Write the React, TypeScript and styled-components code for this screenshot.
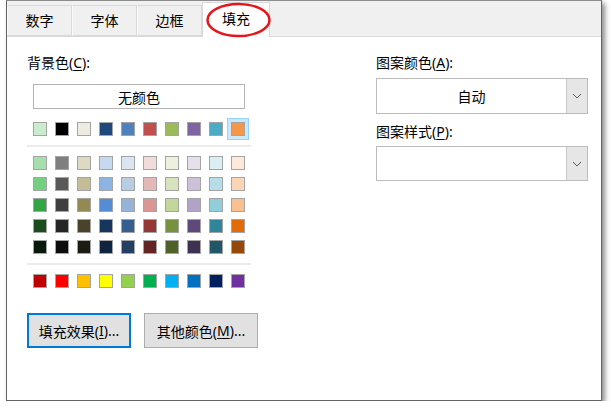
import styled, { createGlobalStyle } from "styled-components";

const GlobalStyle = createGlobalStyle`
  body {
    margin: 0;
    background: #ffffff;
    font-family: "Noto Sans", "Noto Sans CJK SC", sans-serif;
    font-size: 14px;
    color: #000;
  }
`

const themeRow = ["#c9eccf", "#000000", "#eeece1", "#1f497d", "#4f81bd", "#c0504d", "#9bbb59", "#8064a2", "#4bacc6", "#f79646"]

const tintRows = [
  ["#a6dfac", "#7f7f7f", "#ddd9c3", "#c6d9f0", "#dbe5f1", "#f2dcdb", "#ebf1dd", "#e5e0ec", "#dbeef3", "#fdeada"],
  ["#74cf7e", "#595959", "#c4bd97", "#8db3e2", "#b8cce4", "#e5b9b7", "#d7e3bc", "#ccc1d9", "#b7dde8", "#fbd5b5"],
  ["#33a545", "#3f3f3f", "#938953", "#548dd4", "#95b3d7", "#d99694", "#c3d69b", "#b2a2c7", "#92cddc", "#fac08f"],
  ["#1b4d1f", "#262626", "#494429", "#17365d", "#366092", "#953734", "#76923c", "#5f497a", "#31859b", "#e36c09"],
  ["#06190a", "#0d0d0d", "#1d1b10", "#0f243e", "#244061", "#632423", "#4f6128", "#3f3151", "#205867", "#974806"],
]

const standardRow = ["#c00000", "#ff0000", "#ffc000", "#ffff00", "#92d050", "#00b050", "#00b0f0", "#0070c0", "#002060", "#7030a0"]

const tabs = ["数字", "字体", "边框", "填充"]

const Chevron = () => (
  <svg width="10" height="6" viewBox="0 0 10 6">
    <path d="M1 1 L5 5 L9 1" fill="none" stroke="#5a5a5a" strokeWidth="1" />
  </svg>
)

const App = () => {
  return (
    <>
      <GlobalStyle />
      <Frame>
        <TabStrip>
          {tabs.map((t, i) => (
            <Tab key={t} $active={i === 3}>{t}</Tab>
          ))}
        </TabStrip>
        <Content>
          <LeftColumn>
            <Label>背景色(<u>C</u>):</Label>
            <NoColorButton>无颜色</NoColorButton>
            <Palette>
              <SwatchGrid>
                {themeRow.map((c, i) => (
                  <Swatch key={c} $color={c} $selected={i === 9} />
                ))}
              </SwatchGrid>
              <Separator />
              <SwatchGrid>
                {tintRows.flat().map((c, i) => (
                  <Swatch key={i} $color={c} />
                ))}
              </SwatchGrid>
              <Separator />
              <SwatchGrid>
                {standardRow.map((c) => (
                  <Swatch key={c} $color={c} />
                ))}
              </SwatchGrid>
            </Palette>
            <ButtonRow>
              <PushButton $width={104} $focused>填充效果(<u>I</u>)...</PushButton>
              <PushButton $width={114}>其他颜色(<u>M</u>)...</PushButton>
            </ButtonRow>
          </LeftColumn>
          <RightColumn>
            <Label>图案颜色(<u>A</u>):</Label>
            <Dropdown $height={36}>
              <DropValue>自动</DropValue>
              <DropArrow><Chevron /></DropArrow>
            </Dropdown>
            <Label $gap={8}>图案样式(<u>P</u>):</Label>
            <Dropdown $height={35} $gap={4}>
              <DropValue />
              <DropArrow><Chevron /></DropArrow>
            </Dropdown>
          </RightColumn>
        </Content>
        <Highlight width="70" height="38" viewBox="0 0 70 38">
          <ellipse cx="34.5" cy="18" rx="31" ry="16" fill="none" stroke="#e5161b" strokeWidth="2.5" />
        </Highlight>
      </Frame>
    </>
  )
}

const Frame = styled.div`
  position: relative;
  margin-left: 6px;
  width: 596px;
  height: 401px;
  box-sizing: border-box;
  border: 1px solid #646464;
  border-top-color: #8c8c8c;
  box-shadow: 3px 3px 5px rgba(0, 0, 0, 0.45);
  background: #fff;
  display: flex;
  flex-direction: column;
`

const TabStrip = styled.div`
  height: 35px;
  background: #f0f0f0;
  display: flex;
  align-items: flex-end;
  position: relative;
  z-index: 1;
`

const Tab = styled.div<{ $active?: boolean }>`
  box-sizing: border-box;
  width: ${p => (p.$active ? 68 : 65)}px;
  height: ${p => (p.$active ? 35 : 31)}px;
  margin-bottom: ${p => (p.$active ? -1 : 0)}px;
  background: ${p => (p.$active ? "#ffffff" : "#f0f0f0")};
  border: 1px solid #d9d9d9;
  border-bottom: ${p => (p.$active ? "none" : "1px solid #d9d9d9")};
  border-left-color: ${p => (p.$active ? "#d9d9d9" : "#fafafa")};
  display: flex;
  align-items: center;
  justify-content: center;
  padding-bottom: ${p => (p.$active ? 2 : 0)}px;
  line-height: 20px;
`

const Content = styled.div`
  flex: 1;
  display: flex;
  padding: 16px 0 0 20px;
  border-top: 1px solid #d9d9d9;
`

const LeftColumn = styled.div`
  width: 349px;
  display: flex;
  flex-direction: column;
  align-items: flex-start;
`

const RightColumn = styled.div`
  width: 212px;
  display: flex;
  flex-direction: column;
`

const Label = styled.div<{ $gap?: number }>`
  line-height: 20px;
  height: 20px;
  margin-top: ${p => p.$gap || 0}px;
  u {
    text-decoration-thickness: 1px;
    text-underline-offset: 2px;
  }
`

const NoColorButton = styled.div`
  box-sizing: border-box;
  margin: 11px 0 0 6px;
  width: 212px;
  height: 25px;
  border: 1px solid #b4b4b4;
  background: #fff;
  display: flex;
  align-items: center;
  justify-content: center;
`

const Palette = styled.div`
  width: 224px;
  margin-top: 13px;
  display: flex;
  flex-direction: column;
`

const SwatchGrid = styled.div`
  display: grid;
  grid-template-columns: repeat(10, 14px);
  column-gap: 8px;
  row-gap: 7px;
  padding: 0 6px;
`

const Swatch = styled.div<{ $color: string; $selected?: boolean }>`
  box-sizing: border-box;
  width: 14px;
  height: 14px;
  background: ${p => p.$color};
  border: 1px solid #a4a4a4;
  box-shadow: ${p => (p.$selected ? "0 0 0 3px #cce8ff, 0 0 0 4px #99d1ff" : "none")};
`

const Separator = styled.div`
  height: 2px;
  background: #ececec;
  margin: 9px 0;
`

const ButtonRow = styled.div`
  display: flex;
  gap: 13px;
  margin-top: 25px;
`

const PushButton = styled.div<{ $width: number; $focused?: boolean }>`
  box-sizing: border-box;
  width: ${p => p.$width}px;
  height: 35px;
  background: #e1e1e1;
  border: ${p => (p.$focused ? "2px solid #0078d7" : "1px solid #adadad")};
  display: flex;
  align-items: center;
  justify-content: center;
  u {
    text-underline-offset: 2px;
  }
`

const Dropdown = styled.div<{ $height: number; $gap?: number }>`
  box-sizing: border-box;
  height: ${p => p.$height}px;
  margin-top: ${p => (p.$gap === undefined ? 5 : p.$gap)}px;
  border: 1px solid #bcbcbc;
  background: #fff;
  display: flex;
`

const DropValue = styled.div`
  flex: 1;
  display: flex;
  align-items: center;
  justify-content: center;
`

const DropArrow = styled.div`
  width: 20px;
  background: #e6e6e6;
  border-left: 1px solid #c8c8c8;
  display: flex;
  align-items: center;
  justify-content: center;
`

const Highlight = styled.svg`
  position: absolute;
  left: 197px;
  top: 1px;
  z-index: 2;
`

export default App
